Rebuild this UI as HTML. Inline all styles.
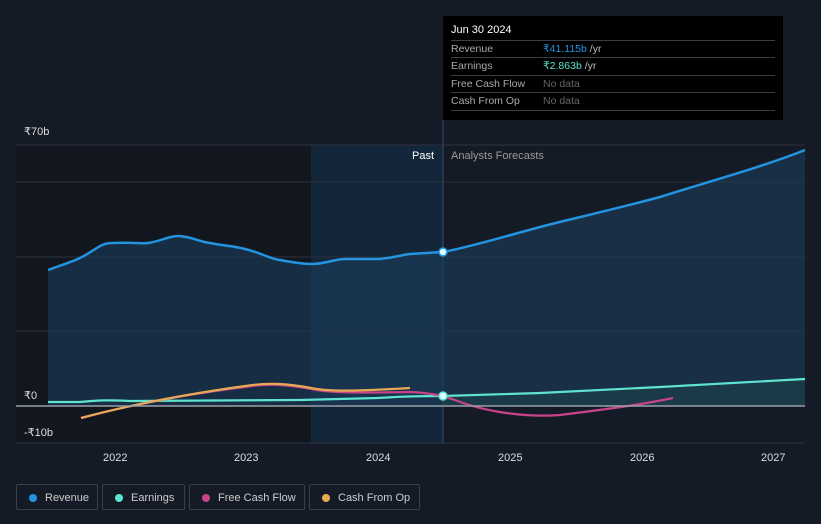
<!DOCTYPE html>
<html><head><meta charset="utf-8"><style>
body{margin:0;width:821px;height:524px;background:#151b26;font-family:"Liberation Sans",sans-serif;overflow:hidden;position:relative}
.tt{position:absolute;left:443px;top:16px;width:340px;height:104px;background:#000}
.tt .h{position:absolute;left:8px;top:8px;color:#fff;font-size:11px}
.row{position:absolute;left:8px;width:324px;border-top:1px solid #3a3f47;height:17px;font-size:10.5px;color:#aaa;line-height:17px}
.row span{position:absolute;left:92px}
.leg{position:absolute;top:484px;height:26px;border:1px solid #3a3f47;border-radius:2px;color:#ccc;font-size:11px;line-height:26px;box-sizing:border-box}
.leg i{position:absolute;left:12px;top:9px;width:8px;height:8px;border-radius:50%}
.leg b{font-weight:normal;position:absolute;left:28px}
.ax{position:absolute;color:#ddd;font-size:11px}
</style></head><body>
<svg width="821" height="524" style="position:absolute;left:0;top:0">
<rect x="16" y="145" width="295" height="298" fill="#12161e"/>
<rect x="311" y="145" width="132" height="298" fill="#14263a"/>
<g stroke="#2c333d" stroke-width="1">
<line x1="16" y1="145" x2="805" y2="145"/><line x1="16" y1="182" x2="805" y2="182"/>
<line x1="16" y1="257" x2="805" y2="257"/><line x1="16" y1="331" x2="805" y2="331"/>
<line x1="16" y1="443" x2="805" y2="443"/></g>
<line x1="443" y1="120" x2="443" y2="443" stroke="#2f4f6e"/>
<path d="M48 270 C64 264 72 262 80 258 C96 250 100 243 112 243 C130 242 140 244 148 243 C162 241 168 236 178 236 C190 236 200 242 210 243 C225 246 235 246 245 249 C262 253 270 259 280 260 C296 263 304 264 312 264 C325 264 335 259 345 259 L378 259 C395 258 400 255 410 254 L443 252 C470 247 510 235 540 227 C570 219 600 213 660 197 C700 184 760 168 805 150 L805 406 L48 406Z" fill="#1a3a58" opacity="0.65"/>
<path d="M48 270 C64 264 72 262 80 258 C96 250 100 243 112 243 C130 242 140 244 148 243 C162 241 168 236 178 236 C190 236 200 242 210 243 C225 246 235 246 245 249 C262 253 270 259 280 260 C296 263 304 264 312 264 C325 264 335 259 345 259 L378 259 C395 258 400 255 410 254 L443 252 C470 247 510 235 540 227 C570 219 600 213 660 197 C700 184 760 168 805 150" fill="none" stroke="#2394e0" stroke-width="2.5"/>
<path d="M443 396 L540 393 L660 387 L805 379 L805 406 L443 406Z" fill="#1d4a4a" opacity="0.4"/>
<path d="M48 402 L80 402 C100 400 110 400 130 401 L300 400 L378 398 C395 397 405 396 443 396 L540 393 L660 387 L805 379" fill="none" stroke="#5fe3d0" stroke-width="2.2"/>
<path d="M81 418 C130 405 180 395 245 387 C270 383 290 385 311 389 C330 393 360 393 410 392 C430 393 440 395 455 400 C480 410 520 418 560 415 C600 410 640 405 673 398" fill="none" stroke="#c84488" stroke-width="2.2"/>
<path d="M81 418 C130 405 180 395 245 386 C270 382 290 384 311 388 C330 392 360 391 410 388" fill="none" stroke="#e8a955" stroke-width="2.2"/>
<line x1="16" y1="406" x2="805" y2="406" stroke="#9aa0a8" stroke-width="1.5"/>
<circle cx="443" cy="252" r="4" fill="#dff" stroke="#2394e0" stroke-width="1.5"/>
<circle cx="443" cy="396" r="4" fill="#dff" stroke="#5fe3d0" stroke-width="1.5"/>
</svg>
<div class="ax" style="left:24px;top:125px">₹70b</div>
<div class="ax" style="left:24px;top:389px">₹0</div>
<div class="ax" style="left:24px;top:426px">-₹10b</div>
<div class="ax" style="left:412px;top:150px;color:#fff">Past</div>
<div class="ax" style="left:451px;top:150px;color:#999">Analysts Forecasts</div>
<div class="ax" style="left:103px;top:452px">2022</div>
<div class="ax" style="left:234px;top:452px">2023</div>
<div class="ax" style="left:366px;top:452px">2024</div>
<div class="ax" style="left:498px;top:452px">2025</div>
<div class="ax" style="left:630px;top:452px">2026</div>
<div class="ax" style="left:761px;top:452px">2027</div>
<div class="tt"><div class="h">Jun 30 2024</div>
<div class="row" style="top:24px">Revenue<span style="color:#2394e0">₹41.115b <em style="font-style:normal;color:#bbb">/yr</em></span></div>
<div class="row" style="top:41px">Earnings<span style="color:#5fe3d0">₹2.863b <em style="font-style:normal;color:#bbb">/yr</em></span></div>
<div class="row" style="top:59px">Free Cash Flow<span style="color:#666">No data</span></div>
<div class="row" style="top:76px;border-bottom:1px solid #3a3f47">Cash From Op<span style="color:#666">No data</span></div>
</div>
<div class="leg" style="left:16px;width:82px"><i style="background:#2394e0"></i><b>Revenue</b></div>
<div class="leg" style="left:102px;width:83px"><i style="background:#5fe3d0"></i><b>Earnings</b></div>
<div class="leg" style="left:189px;width:116px"><i style="background:#c84488"></i><b>Free Cash Flow</b></div>
<div class="leg" style="left:309px;width:111px"><i style="background:#e8a955"></i><b>Cash From Op</b></div>
</body></html>
